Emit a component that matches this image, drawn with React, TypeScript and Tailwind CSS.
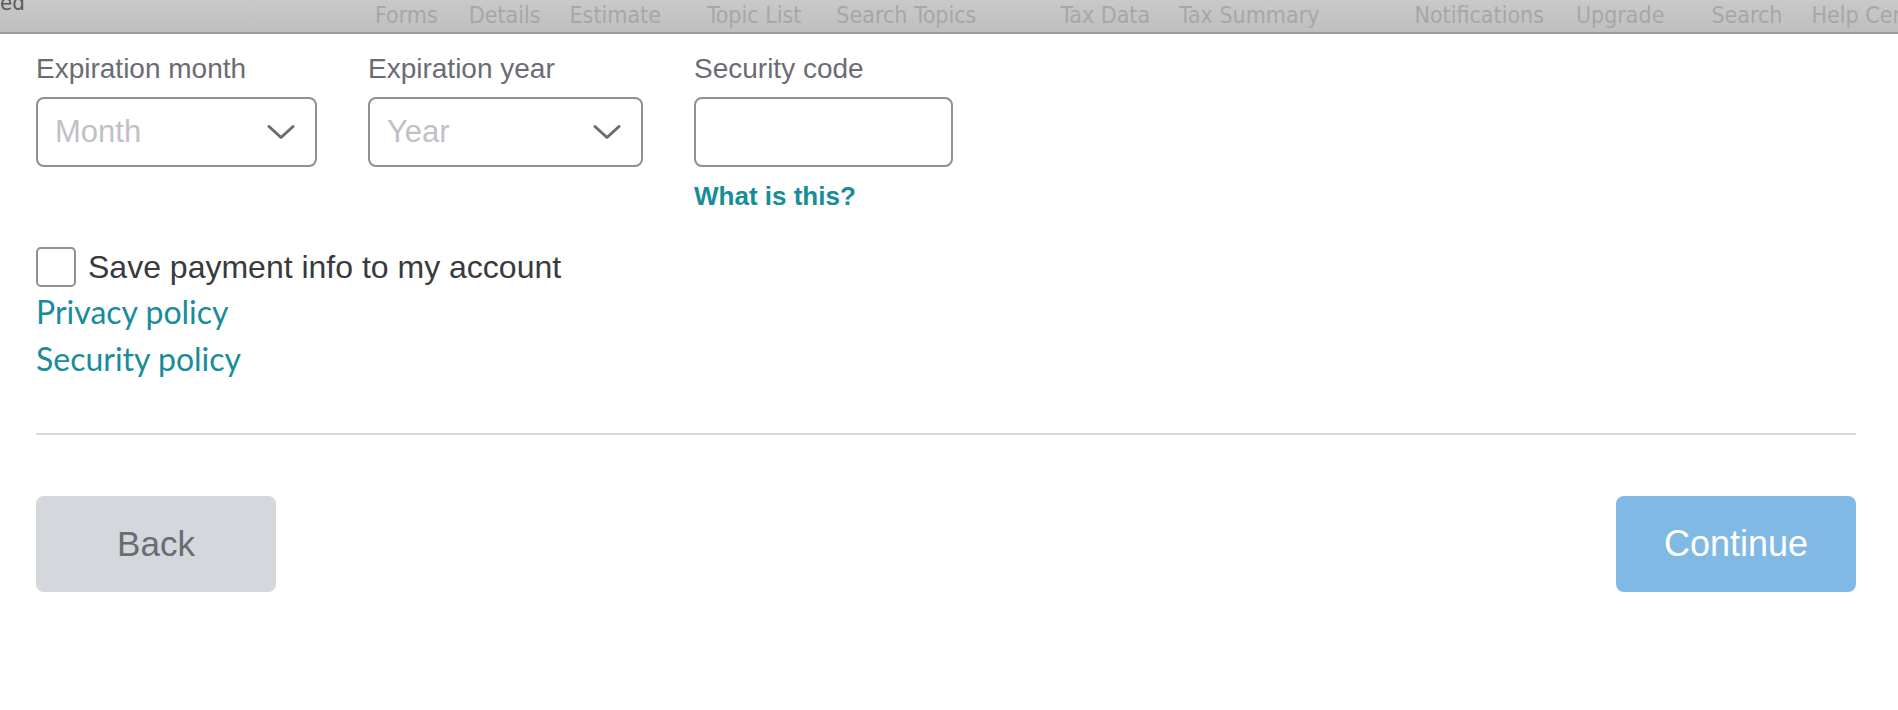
import React from "react";

const navGroups: { label: string; ml: string }[] = [
  { label: "Forms", ml: "ml-[375px]" },
  { label: "Details", ml: "ml-[31px]" },
  { label: "Estimate", ml: "ml-[29px]" },
  { label: "Topic List", ml: "ml-[46px]" },
  { label: "Search Topics", ml: "ml-[35px]" },
  { label: "Tax Data", ml: "ml-[84px]" },
  { label: "Tax Summary", ml: "ml-[29px]" },
  { label: "Notifications", ml: "ml-[95px]" },
  { label: "Upgrade", ml: "ml-[32px]" },
  { label: "Search", ml: "ml-[47px]" },
  { label: "Help Center", ml: "ml-[29px]" },
];

function Chevron() {
  return (
    <svg width="28" height="16" viewBox="0 0 28 16" fill="none" className="shrink-0">
      <path d="M2 2.5 L14 13.5 L26 2.5" stroke="#6b6c72" strokeWidth="3" strokeLinecap="round" strokeLinejoin="round" />
    </svg>
  );
}

function SelectBox({ placeholder, width }: { placeholder: string; width: string }) {
  return (
    <div
      className={`${width} h-[70px] rounded-[8px] border-2 border-[#8d9096] flex items-center justify-between pl-[17px] pr-[20px] bg-white`}
    >
      <span className="text-[31px] text-[#bfc1c6]">{placeholder}</span>
      <Chevron />
    </div>
  );
}

function Field({ label, children }: { label: string; children: React.ReactNode }) {
  return (
    <div className="flex flex-col">
      <label className="text-[28px] leading-[32px] text-[#6b6c72] mb-[12px]">{label}</label>
      {children}
    </div>
  );
}

export default function App() {
  return (
    <div
      className="w-full h-[710px] bg-white overflow-hidden"
      style={{ fontFamily: '"Liberation Sans", Arial, sans-serif' }}
    >
      {/* window chrome / app menu */}
      <div className="relative h-[34px] bg-gradient-to-b from-[#c9c9c9] to-[#bfbfbf] border-b-2 border-[#9b9b9b] flex items-center overflow-hidden">
        <span
          className="absolute left-0 top-[-14px] text-[22px] text-[#5a5a5a]"
          style={{ fontFamily: '"Liberation Sans Narrow", "DejaVu Sans Condensed", sans-serif' }}
        >
          ed
        </span>
        <div
          className="flex items-center text-[23px] text-[#a7a7a7] whitespace-nowrap -mt-[2px]"
          style={{ fontFamily: '"Liberation Sans Narrow", "DejaVu Sans Condensed", sans-serif' }}
        >
          {navGroups.map((n) => (
            <span key={n.label} className={n.ml}>
              {n.label}
            </span>
          ))}
        </div>
      </div>

      <div className="pl-[36px] pr-[42px]">
        <div className="flex gap-[51px] mt-[19px]">
          <Field label="Expiration month">
            <SelectBox placeholder="Month" width="w-[281px]" />
          </Field>
          <Field label="Expiration year">
            <SelectBox placeholder="Year" width="w-[275px]" />
          </Field>
          <Field label="Security code">
            <div className="w-[259px] h-[70px] rounded-[8px] border-2 border-[#8d9096] bg-white" />
            <a className="mt-[14px] text-[26px] leading-[30px] font-semibold text-[#168d98]">What is this?</a>
          </Field>
        </div>

        <label className="flex items-center mt-[32px] gap-[12px]">
          <span className="w-[40px] h-[40px] rounded-[5px] border-2 border-[#8d9096] bg-white" />
          <span className="text-[32px] text-[#393a3d]">Save payment info to my account</span>
        </label>

        <div
          className="flex flex-col -mt-[3px] text-[32px] leading-[47px] text-[#168d98]"
          style={{ fontFamily: 'Lato, "Open Sans", sans-serif' }}
        >
          <a>Privacy policy</a>
          <a>Security policy</a>
        </div>

        <div className="mt-[51px] border-t-2 border-[#d8d9dd]" />

        <div className="flex justify-between mt-[61px]">
          <button className="w-[240px] h-[96px] rounded-[8px] bg-[#d4d7dc] text-[35px] text-[#6b6c72]">
            Back
          </button>
          <button className="w-[240px] h-[96px] rounded-[8px] bg-[#80b9e3] text-[36px] text-white">
            Continue
          </button>
        </div>
      </div>
    </div>
  );
}
